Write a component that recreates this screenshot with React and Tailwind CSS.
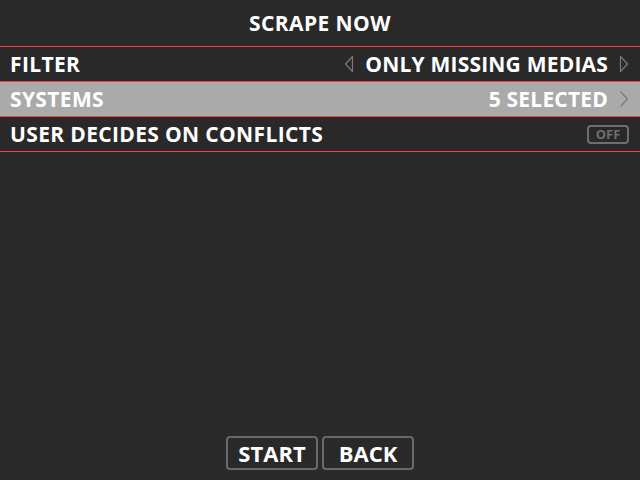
import React from 'react'

const font = { fontFamily: '"Open Sans", "DejaVu Sans", sans-serif' }

function LeftArrow() {
  return (
    <svg width="10" height="18" viewBox="0 0 10 18" className="shrink-0">
      <path d="M8.5 1.5 L1.5 9 L8.5 16.5 Z" fill="none" stroke="#7a7a7a" strokeWidth="1.2" strokeLinejoin="round" />
    </svg>
  )
}

function RightArrow() {
  return (
    <svg width="10" height="18" viewBox="0 0 10 18" className="shrink-0">
      <path d="M1.5 1.5 L8.5 9 L1.5 16.5 Z" fill="none" stroke="#7a7a7a" strokeWidth="1.2" strokeLinejoin="round" />
    </svg>
  )
}

function Chevron() {
  return (
    <svg width="10" height="18" viewBox="0 0 10 18" className="shrink-0">
      <path d="M1.5 1.5 L8.5 9 L1.5 16.5" fill="none" stroke="#7a7a7a" strokeWidth="1.2" strokeLinejoin="round" />
    </svg>
  )
}

function Row({ label, selected, children }) {
  return (
    <div
      className={`flex h-[34px] items-center justify-between pl-[10px] pr-[11px] ${
        selected ? 'bg-[#aaaaaa]' : ''
      }`}
    >
      <span className="text-[21px] font-bold leading-none tracking-[0.35px] text-white">{label}</span>
      <div className="flex items-center gap-[11px]">{children}</div>
    </div>
  )
}

const Line = () => <div className="h-px bg-[#ee4444]" />

export default function App() {
  return (
    <div className="flex h-[480px] w-[640px] flex-col bg-[#292929]" style={font}>
      <div className="flex h-[46px] items-center justify-center">
        <h1 className="text-[21px] font-bold leading-none tracking-[0.4px] text-white">SCRAPE NOW</h1>
      </div>
      <Line />
      <Row label="FILTER">
        <LeftArrow />
        <span className="text-[21px] font-bold leading-none tracking-[0.2px] text-white">ONLY MISSING MEDIAS</span>
        <RightArrow />
      </Row>
      <Line />
      <Row label="SYSTEMS" selected>
        <span className="text-[21px] font-bold leading-none tracking-[0.2px] text-white">5 SELECTED</span>
        <Chevron />
      </Row>
      <Line />
      <Row label="USER DECIDES ON CONFLICTS">
        <span className="flex h-[19px] w-[42px] items-center justify-center rounded-[4px] border-2 border-[#6e6e6e] text-[13px] font-bold leading-none text-[#6e6e6e]">
          OFF
        </span>
      </Row>
      <Line />
      <div className="flex-1" />
      <div className="flex justify-center gap-[4px] pb-[10px]">
        <button className="h-[34px] w-[92px] rounded-[4px] border-2 border-[#6a6a6a] text-[22px] font-bold leading-none text-white">
          START
        </button>
        <button className="h-[34px] w-[92px] rounded-[4px] border-2 border-[#6a6a6a] text-[22px] font-bold leading-none text-white">
          BACK
        </button>
      </div>
    </div>
  )
}
